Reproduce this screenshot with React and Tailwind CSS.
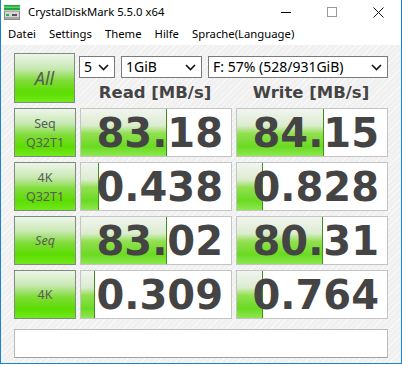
import React from "react";

const rows = [
  { top: "Seq", bottom: "Q32T1", read: "83.18", write: "84.15", rw: 86, ww: 87 },
  { top: "4K", bottom: "Q32T1", read: "0.438", write: "0.828", rw: 18, ww: 26 },
  { top: "Seq", read: "83.02", write: "80.31", rw: 86, ww: 86, italic: true },
  { top: "4K", read: "0.309", write: "0.764", rw: 14, ww: 26 },
];

function AppIcon() {
  return (
    <svg width="16" height="15" viewBox="0 0 16 15">
      <rect x="0" y="0" width="16" height="5" fill="#22a83a" />
      <rect x="0" y="1.5" width="16" height="1.5" fill="#5fd16f" />
      <rect x="0.5" y="6" width="15" height="8.5" fill="#d6d6d6" stroke="#8a8a8a" />
      <rect x="1" y="12" width="14" height="2" fill="#a8a8a8" />
      <rect x="2" y="9" width="3" height="2" fill="#2bb34a" />
      <rect x="8" y="9" width="5" height="2" fill="#555" />
    </svg>
  );
}

function Chevron() {
  return (
    <svg width="11" height="7" viewBox="0 0 11 7" className="shrink-0">
      <path d="M1 1 L5.5 5.5 L10 1" fill="none" stroke="#111" strokeWidth="1.6" />
    </svg>
  );
}

function Select({ className, children }) {
  return (
    <div
      className={`flex h-[22px] items-center justify-between border border-[#7a7a7a] bg-white pl-[4px] pr-[5px] text-[14px] text-black ${className}`}
    >
      <span className="leading-none">{children}</span>
      <Chevron />
    </div>
  );
}

function GreenButton({ children, className = "" }) {
  return (
    <div
      className={`flex w-[62px] flex-col items-center justify-center border border-[#7d8d7d] bg-[linear-gradient(to_bottom,#eef5ea_0%,#c9e9b4_30%,#80dc3a_55%,#5cdc00_80%,#72e81c_100%)] text-[#5a5a5a] ${className}`}
    >
      {children}
    </div>
  );
}

function ValueBox({ value, bar }) {
  return (
    <div className="relative flex h-full w-[152px] items-center justify-end border border-[#c4c4c4] bg-white pr-[8px]">
      <div
        className="absolute left-0 top-0 h-full border-r border-[#3f8f1f] bg-[linear-gradient(to_bottom,#f1f5f0_0%,#dcecd0_35%,#92e050_52%,#6ada22_80%,#8ee850_100%)]"
        style={{ width: bar }}
      />
      <span className="relative font-['DejaVu_Sans'] text-[40px] font-bold leading-none text-[#444]">
        {value}
      </span>
    </div>
  );
}

export default function App() {
  return (
    <div className="relative flex h-[367px] w-[402px] flex-col overflow-hidden bg-white font-['Noto_Sans',sans-serif]">
      <div className="flex h-[364px] flex-col border-x border-b border-[#1883d7]">
        {/* title bar */}
        <div className="flex h-[24px] shrink-0 items-center bg-white">
          <div className="ml-[3px] mt-[1px]">
            <AppIcon />
          </div>
          <span className="ml-[8px] text-[11.3px] text-black">CrystalDiskMark 5.5.0 x64</span>
          <div className="ml-auto flex items-center">
            <div className="flex w-[46px] justify-center">
              <div className="h-px w-[10px] bg-black" />
            </div>
            <div className="flex w-[46px] justify-center">
              <div className="h-[10px] w-[10px] border border-[#999]" />
            </div>
            <div className="flex w-[46px] justify-center">
              <svg width="11" height="11" viewBox="0 0 11 11">
                <path d="M0.5 0.5 L10.5 10.5 M10.5 0.5 L0.5 10.5" stroke="#111" strokeWidth="1" />
              </svg>
            </div>
          </div>
        </div>
        {/* menu */}
        <div className="flex h-[21px] shrink-0 items-center gap-[13px] bg-white pl-[7px] text-[11.3px] text-black">
          <span>Datei</span>
          <span>Settings</span>
          <span>Theme</span>
          <span>Hilfe</span>
          <span>Sprache(Language)</span>
        </div>
        {/* main */}
        <div className="flex flex-1 flex-col bg-[repeating-linear-gradient(135deg,#f0f0f0_0px,#f0f0f0_3px,#f8f8f8_3px,#f8f8f8_4px)] px-[13px] pt-[8px]">
          <div className="flex gap-[4px]">
            <GreenButton className="h-[50px]">
              <span className="text-[18px] italic">All</span>
            </GreenButton>
            <div className="flex flex-col">
              <div className="mt-[3px] flex gap-[6px]">
                <Select className="w-[36px]">5</Select>
                <Select className="w-[81px]">1GiB</Select>
                <Select className="w-[180px]">F: 57% (528/931GiB)</Select>
              </div>
              <div className="flex h-[30px] items-center gap-[4px] font-['DejaVu_Sans'] text-[16.5px] font-bold text-[#444]">
                <div className="w-[152px] text-center">Read [MB/s]</div>
                <div className="w-[152px] text-center">Write [MB/s]</div>
              </div>
            </div>
          </div>
          <div className="flex flex-col gap-[5px]">
            {rows.map((r, i) => (
              <div key={i} className="flex h-[49px] gap-[4px]">
                <GreenButton className="h-full leading-[19px]">
                  <span className={`text-[12.5px] ${r.italic ? "italic" : ""}`}>{r.top}</span>
                  {r.bottom && <span className="text-[12.5px]">{r.bottom}</span>}
                </GreenButton>
                <ValueBox value={r.read} bar={r.rw} />
                <ValueBox value={r.write} bar={r.ww} />
              </div>
            ))}
          </div>
          <div className="mt-[10px] h-[29px] w-[374px] border border-[#bbb] border-b-[#a0a0a0] bg-white" />
        </div>
      </div>
    </div>
  );
}
